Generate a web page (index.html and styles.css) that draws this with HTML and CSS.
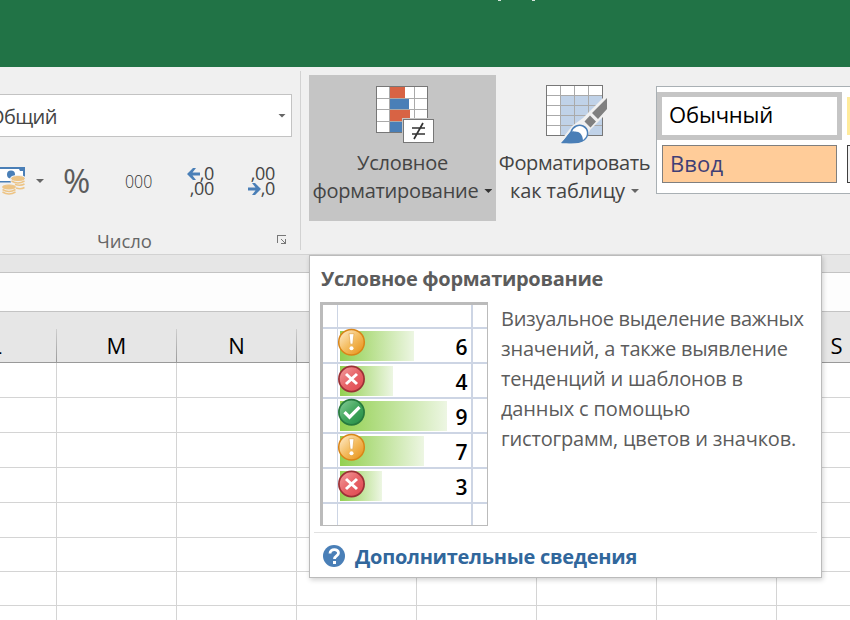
FILE: index.html
```html
<!DOCTYPE html>
<html lang="ru">
<head>
<meta charset="utf-8">
<title>Excel</title>
<link rel="stylesheet" href="styles.css">
</head>
<body>
<div class="window">
  <header class="titlebar"><i class="tick"></i><i class="tick"></i></header>
  <section class="ribbon">
    <div class="group number-group">
      <div class="format-box"><span class="t format-text">Общий</span><i class="caret"></i></div>
      <div class="number-tools">
        <svg class="money" viewBox="0 164 26 34" width="26" height="34">
          <rect x="-6" y="167" width="31" height="15.500" fill="#4a7fb7"/>
          <path d="M-4 169H19L20 171H23V177H20L18 181H-4Z" fill="#fff"/>
          <circle cx="11" cy="174.500" r="4" fill="#4a7fb7"/>
          <path d="M10 179q0-4 8-4t8 4v13H16v4H0V186q0-3 8-3h3z" fill="#f0f0f0"/>
          <g fill="#edc485" stroke="#edc485"><ellipse cx="18" cy="178.500" rx="6.500" ry="2" /><ellipse cx="9" cy="187" rx="6.500" ry="2"/></g>
          <path d="M11.500 181q6.500 4 13 0M15 184.500q6 1.500 9.500-.5M16 188q5 1.500 8.500-.5M2.500 189.500q6.500 4 13 0M2.500 192q6.500 4 13 0" fill="none" stroke="#edc485" stroke-width="1.500"/>
        </svg>
        <i class="caret"></i>
        <span class="t percent">%</span>
        <span class="t thousands">000</span>
        <span class="decimal dec-more">
          <span><svg viewBox="0 0 13 12" width="13" height="12"><path d="M0 6 6 0H9L5.500 4.500H13V7.500H5.500L9 12H6Z" fill="#4a7fb7"/></svg><b>,0</b></span>
          <span><b>,00</b></span>
        </span>
        <span class="decimal dec-less">
          <span><b>,00</b></span>
          <span><svg viewBox="0 0 13 12" width="13" height="12"><path d="M13 6 7 0H4L7.500 4.500H0V7.500H7.500L4 12H7Z" fill="#4a7fb7"/></svg><b>,0</b></span>
        </span>
      </div>
      <div class="group-foot"><span class="t group-label">Число</span>
        <svg viewBox="0 0 10 10" width="10" height="10" shape-rendering="crispEdges"><path d="M.5 8V.5H9" fill="none" stroke="#777"/><path d="M4 4h1v1h1v1h1v1h1V4h1v5H4V8h3V7H6V6H5V5H4z" fill="#777"/></svg>
      </div>
    </div>
    <div class="group styles-group">
      <button class="big-button active">
        <svg class="cf-icon" viewBox="376 85 59 59" width="59" height="59">
          <rect x="376.500" y="86.500" width="51" height="46" fill="#fff" stroke="#777"/>
          <path d="M389.500 87V132M414.500 87V132M377 98.500H427M377 109.500H427M377 121.500H427" stroke="#aaa"/>
          <path d="M390 87h15v11h-15zM390 110h20v11h-20z" fill="#d86344"/>
          <path d="M390 99h19v10h-19zM390 122h15v10h-15z" fill="#4a7fb7"/>
          <path d="M402 118H428V119H403V133H402Z" fill="#c5c5c5"/>
          <rect x="403.500" y="119.500" width="30" height="23" fill="#fff" stroke="#777"/>
          <path d="M412 128H425M412 134H425M414 139 423 123" stroke="#333" stroke-width="1.700" fill="none"/>
        </svg>
        <span class="t bt1">Условное</span>
        <span class="row2"><span class="t bt2">форматирование</span><i class="caret dark"></i></span>
      </button>
      <button class="big-button table-button">
        <svg class="ft-icon" viewBox="546 85 61 59" width="61" height="59">
          <rect x="546.500" y="85.500" width="56" height="50" fill="#fff" stroke="#777"/>
          <rect x="561" y="96" width="41" height="39" fill="#c0d2e8"/>
          <path d="M560.500 86V135M574.500 86V135M588.500 86V135M547 95.500H602M547 105.500H602M547 115.500H602M547 125.500H602" stroke="#aaa"/>
          <path d="M607 94V113L590 130L585 144H558L572 126L583 118Z" fill="#f0f0f0"/>
          <path d="M607 98V109L598 119L592 113ZM590 115.500 596 121.500 590.500 127.500 584.500 121.500Z" fill="#808080"/>
          <path d="M571 132C573 126 579 124 583 126C589 129 589 136 584 140C580 143 576 142.500 563 142.500Z" fill="#fff" stroke="#4a7fb7" stroke-width="1.500"/>
          <path d="M561 143C567 138 570 130 574 131.500C579 131 583 134 583 141C577 144 571 143 561 143Z" fill="#4a7fb7"/>
        </svg>
        <span class="t bt3">Форматировать</span>
        <span class="row2"><span class="t bt4">как таблицу</span><i class="caret"></i></span>
      </button>
      <div class="gallery">
        <div class="style-cell selected"><span class="t g1">Обычный</span></div><div class="style-cell neutral"></div>
        <div class="style-cell input"><span class="t g2">Ввод</span></div><div class="style-cell output"></div>
      </div>
    </div>
  </section>
  <div class="gap"></div>
  <div class="formula-bar"></div>
  <div class="columns"><div><span class="col-l">L</span></div><div>M</div><div>N</div><div></div><div></div><div></div><div></div><div><span class="col-s">S</span></div></div>
  <div class="sheet">
    <div class="cells"><i></i><i></i><i></i><i></i><i></i><i></i><i></i><i></i></div>
    <div class="cells"><i></i><i></i><i></i><i></i><i></i><i></i><i></i><i></i></div>
    <div class="cells"><i></i><i></i><i></i><i></i><i></i><i></i><i></i><i></i></div>
    <div class="cells"><i></i><i></i><i></i><i></i><i></i><i></i><i></i><i></i></div>
    <div class="cells"><i></i><i></i><i></i><i></i><i></i><i></i><i></i><i></i></div>
    <div class="cells short"><i></i><i></i><i></i><i></i><i></i><i></i><i></i><i></i></div>
    <div class="cells short"><i></i><i></i><i></i><i></i><i></i><i></i><i></i><i></i></div>
    <div class="cells short"><i></i><i></i><i></i><i></i><i></i><i></i><i></i><i></i></div>
  </div>
  <aside class="tooltip">
    <h2><span class="t tip-title">Условное форматирование</span></h2>
    <div class="tip-body">
      <svg class="preview" viewBox="320 302 168 224" width="168" height="224">
        <defs>
          <linearGradient id="bar"><stop offset="0" stop-color="#92d050"/><stop offset="1" stop-color="#edf6e3"/></linearGradient>
          <linearGradient id="orange" x2="1" y2="1"><stop offset="0" stop-color="#fff1d8"/><stop offset=".5" stop-color="#f4bd61"/><stop offset="1" stop-color="#e58d12"/></linearGradient>
          <linearGradient id="red" x2="1" y2="1"><stop offset="0" stop-color="#f3a3a3"/><stop offset=".5" stop-color="#e76468"/><stop offset="1" stop-color="#e0474f"/></linearGradient>
          <linearGradient id="green" x2="1" y2="1"><stop offset="0" stop-color="#8bcf9c"/><stop offset=".5" stop-color="#43a75e"/><stop offset="1" stop-color="#238a45"/></linearGradient>
          <g id="warn"><circle r="12.800" fill="url(#orange)" stroke="#d98518" stroke-width="1.500"/><path d="M-2.500-8.500H2.500L1.300 2H-1.300Z" fill="#fff" stroke="#e3a64b" stroke-width=".7"/><circle cy="6" r="2" fill="#fff"/></g>
          <g id="fail"><circle r="12.600" fill="url(#red)" stroke="#9b3036" stroke-width="1.700"/><path d="M-5.500-5 5.500 5M5.500-5-5.500 5" stroke="#fff" stroke-width="3"/></g>
          <g id="pass"><circle r="12.600" fill="url(#green)" stroke="#277a3e" stroke-width="1.700"/><path d="M-7 0-2 5 8-5" fill="none" stroke="#fff" stroke-width="3.300"/></g>
        </defs>
        <rect x="320" y="302" width="168" height="224" fill="#bbb"/>
        <rect x="323" y="305" width="164" height="220" fill="#fff"/>
        <path d="M337.500 305V525" stroke="#cdd5e4"/>
        <path d="M472 305V525M323 328H487M323 363H487M323 398H487M323 433H487M323 468H487M323 503H487" stroke="#cdd5e4" stroke-width="2"/>
        <g fill="url(#bar)"><rect x="340" y="331" width="74" height="30"/><rect x="340" y="366" width="53" height="30"/><rect x="340" y="401" width="107" height="30"/><rect x="340" y="436" width="84" height="30"/><rect x="340" y="471" width="42" height="30"/></g>
        <use href="#warn" x="351.500" y="342.200"/><use href="#fail" x="351.500" y="379"/><use href="#pass" x="351.500" y="412.200"/><use href="#warn" x="351.500" y="447.200"/><use href="#fail" x="351.500" y="484"/>
        <g class="preview-num"><text x="455.500" y="355">6</text><text x="455.500" y="390">4</text><text x="455.500" y="425">9</text><text x="455.500" y="460">7</text><text x="455.500" y="495">3</text></g>
      </svg>
      <p><span class="t d1">Визуальное выделение важных</span><span class="t d2">значений, а также выявление</span><span class="t d3">тенденций и шаблонов в</span><span class="t d4">данных с помощью</span><span class="t d5">гистограмм, цветов и значков.</span></p>
    </div>
    <div class="tip-more">
      <svg viewBox="0 0 22 22" width="22" height="22"><circle cx="11" cy="11" r="11" fill="#4a7fb7"/><path d="M7 8.500C7 3.500 15.500 3.500 15.500 8C15.500 11 11.500 10.800 11.500 14" fill="none" stroke="#fff" stroke-width="2.800"/><path d="M10 16h3v3h-3z" fill="#fff"/></svg>
      <span class="t more">Дополнительные сведения</span>
    </div>
  </aside>
</div>
</body>
</html>
```
FILE: styles.css
```css
* { box-sizing: border-box; }
body { margin: 0; font-family: "Open Sans", "Noto Sans", sans-serif; font-size: 20px; color: #444; }
svg { display: block; flex: none; }
.window { position: relative; width: 850px; height: 620px; overflow: hidden; background: #fff; }
.t { display: block; white-space: nowrap; }
.titlebar { height: 67px; background: #217346; display: flex; padding-left: 498px; gap: 31px; }
.tick { width: 3px; height: 1px; background: #d5e5dc; }
.ribbon { display: flex; height: 188px; background: #f0f0f0; border-bottom: 1px solid #d2d2d2; }
.caret { width: 8px; height: 4px; background: #666; clip-path: polygon(0 0, 100% 0, 50% 100%); flex: none; }
.caret.dark { background: #333; }
.number-group { width: 300px; flex: none; padding-top: 27px; }
.format-box { width: 292px; height: 43px; border: 1px solid #c3c3c3; border-left: 0; background: #fff; display: flex; align-items: center; justify-content: space-between; padding-right: 5px; }
.format-text { margin-left: -11px; font-size: 20px; letter-spacing: -.6px; padding-top: 1px; }
.number-tools { display: flex; height: 88px; align-items: center; }
.number-tools .caret { margin-left: 10px; }
.percent { font-size: 33px; line-height: 40px; width: 27px; margin-left: 19px; color: #5c5c5c; }
.thousands { margin-left: 35px; width: 28px; font-weight: 300; font-size: 19px; transform: scaleX(.84); transform-origin: 0 50%; color: #333; }
.decimal { display: block; width: 28px; margin-left: 33px; color: #444; }
.dec-less { margin-left: 33px; }
.decimal > span { display: flex; height: 15px; justify-content: flex-end; align-items: center; }
.decimal b { font-weight: 400; font-size: 18px; line-height: 15px; letter-spacing: -.3px; }
.group-foot { height: 30px; display: flex; justify-content: space-between; align-items: center; padding: 0 13px 0 97px; color: #666; font-size: 18.500px; }
.group-label { letter-spacing: -.1px; }
.styles-group { flex: 1; display: flex; position: relative; padding: 8px 0 0 8px; }
.styles-group::before { content: ""; position: absolute; left: 0; top: 4px; width: 1px; height: 179px; background: #d2d2d2; }
.big-button { width: 187px; height: 146px; flex: none; border: 0; padding: 10px 0 0; margin: 0 0 0 1px; background: none; font: inherit; color: #444; display: flex; flex-direction: column; align-items: center; line-height: 28px; }
.big-button.active { background: #c5c5c5; }
.cf-icon { margin-left: 6px; }
.bt1, .bt3 { margin-top: 5px; }
.bt1 { letter-spacing: -.25px; }
.bt2 { letter-spacing: -.3px; }
.bt3 { letter-spacing: -.38px; }
.bt4 { letter-spacing: -.1px; }
.row2 { display: flex; align-items: center; gap: 6px; }
.table-button { width: 157px; margin: 0; }
.ft-icon { margin-left: 4px; }
.gallery { width: 240px; height: 108px; margin: 11px 0 0 3px; flex: none; background: #fff; border: 1px solid #a9b0b4; padding-top: 5px; display: grid; grid-template-columns: 185px 60px; grid-template-rows: 48px 38px; row-gap: 5px; }
.style-cell { display: flex; align-items: center; padding-left: 7px; color: #000; font-size: 22px; line-height: 30px; }
.selected { border: 5px solid #c5c5c5; padding-bottom: 4px; }
.g1 { letter-spacing: -.15px; }
.g2 { letter-spacing: .1px; }
.input { margin: 0 5px; border: 1px solid #7f7f7f; background: #ffcc99; color: #3f3f76; padding-bottom: 3px; }
.neutral { margin: 5px; background: #ffeb9c; }
.output { margin-left: 5px; border: 1px solid #3f3f3f; background: #f2f2f2; }
.gap { height: 18px; background: #e6e6e6; border-bottom: 1px solid #c3c3c3; }
.formula-bar { height: 39px; background: #fdfdfd; border-bottom: 1px solid #c3c3c3; }
.columns { height: 51px; background: #e6e6e6; border-bottom: 1px solid #999; display: grid; grid-template-columns: 57px repeat(7, 120px); align-items: end; color: #000; font-size: 22px; }
.columns div { height: 33px; line-height: 33px; text-align: center; border-right: 1px solid; border-image: linear-gradient(#d0d0d0, #999) 1; }
.col-l { display: block; margin-left: -64px; }
.cells { display: grid; grid-template-columns: 57px repeat(7, 120px); height: 35px; }
.cells.short { height: 34px; }
.cells i { border: 0 solid #d4d4d4; border-width: 0 1px 1px 0; }
.tooltip { position: absolute; left: 309px; top: 255px; width: 513px; height: 323px; background: #fff; border: 1px solid #bbb; box-shadow: 1px 2px 5px rgba(0,0,0,.18); padding: 8px 4px 0; color: #5c5c5c; }
.tooltip h2 { margin: 0; padding-left: 7px; font-size: 20px; line-height: 30px; font-weight: 700; height: 38px; letter-spacing: -.3px; }
.tip-body { display: flex; padding-left: 6px; height: 230px; gap: 13px; }
.tip-body p { margin: 2px 0 0; line-height: 30px; }
.d1 { letter-spacing: -.29px; }
.d2 { letter-spacing: -.2px; }
.d3 { letter-spacing: -.23px; }
.d4 { letter-spacing: -.13px; }
.d5 { letter-spacing: -.17px; }
.tip-more { border-top: 1px solid #e1e1e1; display: flex; align-items: center; gap: 10px; padding: 3px 0 0 9px; color: #31679c; font-weight: 700; line-height: 42px; }
.tip-more svg { margin-top: -3px; }
.more { letter-spacing: -.27px; }
.preview-num { font-family: "Open Sans", sans-serif; font-size: 21px; font-weight: 600; fill: #000; }
```
